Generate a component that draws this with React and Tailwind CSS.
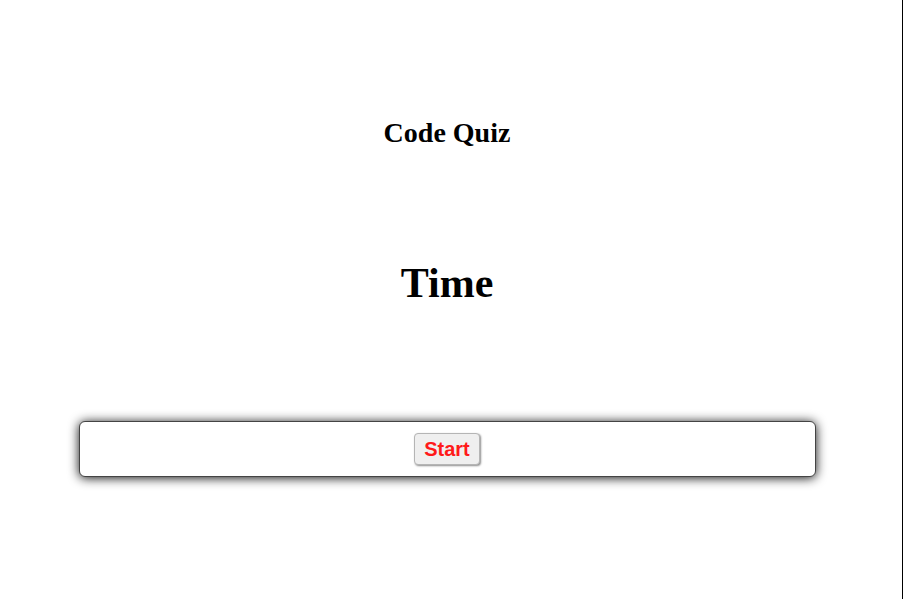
export default function App() {
  return (
    <div className="min-h-[599px] w-[903px] pr-[8px] bg-white border-r border-black flex flex-col items-center font-['Liberation_Serif',serif] text-black">
      {/* Header */}
      <h1 className="mt-[117px] text-[28px] leading-[32px] font-bold">Code Quiz</h1>

      {/* Timer */}
      <h2 className="mt-[110px] text-[42px] leading-[48px] font-bold">Time</h2>

      {/* Controls card */}
      <div className="mt-[114px] w-[737px] h-[56px] bg-white border border-[#444] rounded-[6px] shadow-[0_1px_11px_rgba(0,0,0,0.95)] flex items-center justify-center">
        <button className="h-[32px] px-[9px] bg-[#efefef] border border-[#b5b5b5] rounded-[4px] shadow-[1px_1px_2px_rgba(0,0,0,0.45)] text-[20px] font-bold text-[#ff1a1a] font-['Liberation_Sans',sans-serif]">
          Start
        </button>
      </div>
    </div>
  );
}
